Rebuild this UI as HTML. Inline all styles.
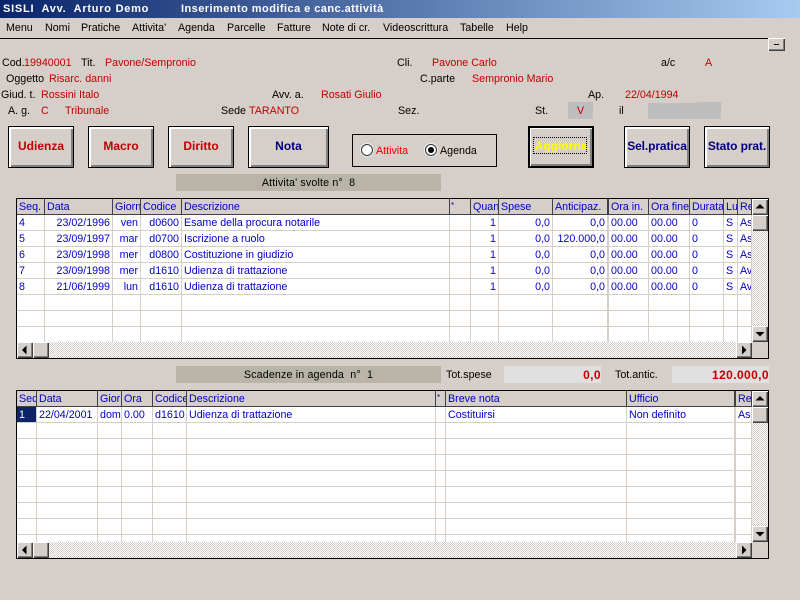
<!DOCTYPE html>
<html lang="it">
<head>
<meta charset="utf-8">
<title>SISLI</title>
<style>
html,body{margin:0;padding:0}
body{width:800px;height:600px;background:#d6cec8;position:relative;overflow:hidden;font:10.7px/15px "Liberation Sans",sans-serif;color:#000}
.a,.t,.r,.k,.b{position:absolute;white-space:pre}
.t,.r{line-height:14px}
.r{color:#c00000}
#title{position:absolute;left:0;top:0;width:800px;height:18px;background:linear-gradient(90deg,#0a246a,#a6caf0)}
#title span{position:absolute;top:2px;color:#fff;font:bold 11px/15px "Liberation Sans",sans-serif;white-space:pre;letter-spacing:.45px}
.b{box-sizing:border-box;top:126px;height:42px;width:66px;background:#d6cec8;border:1px solid #000;box-shadow:inset 2px 2px 0 #fff,inset -2px -2px 0 #808080;font:bold 12px/38px "Liberation Sans",sans-serif;text-align:center;color:#c00000}
.n{color:#00007f}
.s{position:absolute;background:#b8b4a8;text-align:center;left:176px;width:265px;height:17px;line-height:18px;white-space:pre;letter-spacing:.15px}
.f{position:absolute;top:366px;height:17px;background:#e0e0e0;color:#c00000;font:bold 12px/18px "Liberation Sans",sans-serif;text-align:right;letter-spacing:.4px}
.g{position:absolute;left:16px;width:751px;border:1px solid #000;overflow:hidden;background:#fff}
table{position:absolute;left:0;top:0;border-spacing:0;table-layout:fixed;color:#0000c8;font:10.7px/13px "Liberation Sans",sans-serif}
td,th{box-sizing:border-box;height:16px;padding:2px 2px 0;border-right:1px solid #d6cec8;border-bottom:1px solid #d6cec8;white-space:nowrap;overflow:hidden;font-weight:normal;text-align:left;vertical-align:top}
th{background:#d6cec8;border-right-color:#404040;border-bottom-color:#404040}
th.st{font-size:8px;padding:0 1px}
.x{text-align:right}
.w{border-right-width:2px}
.h{position:absolute;background-color:#fff;background-image:conic-gradient(#d6cec8 25%,#fff 0 50%,#d6cec8 0 75%,#fff 0);background-size:2px 2px}
.u{position:absolute;box-sizing:border-box;background:#d6cec8;box-shadow:inset 1px 1px 0 #fff,inset -1px -1px 0 #404040,inset -2px -2px 0 #808080}
.u svg{position:absolute;left:0;top:0}
.c{position:absolute;background:#d6cec8}
.o{position:absolute;top:144px;width:12px;height:12px;box-sizing:border-box;border-radius:50%;background:#fff;border:1px solid #333;box-shadow:0 0 0 1px #eee}
</style>
</head>
<body>
<div id="title"><span style="left:3px;letter-spacing:.75px">SISLI  Avv.  Arturo Demo</span><span style="left:181px">Inserimento modifica e canc.attività</span></div>

<div class="a" style="left:6px;top:21px">Menu</div>
<div class="a" style="left:45px;top:21px">Nomi</div>
<div class="a" style="left:81px;top:21px">Pratiche</div>
<div class="a" style="left:132px;top:21px">Attivita'</div>
<div class="a" style="left:178px;top:21px">Agenda</div>
<div class="a" style="left:227px;top:21px">Parcelle</div>
<div class="a" style="left:277px;top:21px">Fatture</div>
<div class="a" style="left:322px;top:21px">Note di cr.</div>
<div class="a" style="left:383px;top:21px">Videoscrittura</div>
<div class="a" style="left:460px;top:21px">Tabelle</div>
<div class="a" style="left:506px;top:21px">Help</div>
<div class="c" style="left:0;top:38px;width:768px;height:1px;background:#000"></div>
<div class="u" style="left:768px;top:38px;width:17px;height:13px"><svg width="17" height="13"><rect x="6" y="6" width="5" height="1" fill="#000"/></svg></div>

<div class="t" style="left:2px;top:56px">Cod.</div><div class="r" style="left:24px;top:56px">19940001</div>
<div class="t" style="left:81px;top:56px">Tit.</div><div class="r" style="left:105px;top:56px">Pavone/Sempronio</div>
<div class="t" style="left:397px;top:56px">Cli.</div><div class="r" style="left:432px;top:56px">Pavone Carlo</div>
<div class="t" style="left:661px;top:56px">a/c</div><div class="r" style="left:705px;top:56px">A</div>

<div class="t" style="left:6px;top:72px">Oggetto</div><div class="r" style="left:49px;top:72px">Risarc. danni</div>
<div class="t" style="left:420px;top:72px">C.parte</div><div class="r" style="left:472px;top:72px">Sempronio Mario</div>

<div class="t" style="left:1px;top:88px">Giud. t.</div><div class="r" style="left:41px;top:88px">Rossini Italo</div>
<div class="t" style="left:272px;top:88px">Avv. a.</div><div class="r" style="left:321px;top:88px">Rosati Giulio</div>
<div class="t" style="left:588px;top:88px">Ap.</div><div class="r" style="left:625px;top:88px">22/04/1994</div>

<div class="c" style="left:568px;top:102px;width:25px;height:17px;background:#bebebe"></div>
<div class="c" style="left:648px;top:103px;width:49px;height:16px;background:#bebebe"></div>
<div class="c" style="left:697px;top:102px;width:24px;height:17px;background:#bebebe"></div>
<div class="t" style="left:8px;top:104px">A. g.</div><div class="r" style="left:41px;top:104px">C</div><div class="r" style="left:65px;top:104px">Tribunale</div>
<div class="t" style="left:221px;top:104px">Sede</div><div class="r" style="left:249px;top:104px">TARANTO</div>
<div class="t" style="left:398px;top:104px">Sez.</div>
<div class="t" style="left:535px;top:104px">St.</div><div class="r" style="left:577px;top:104px">V</div>
<div class="t" style="left:619px;top:104px">il</div>

<div class="b" style="left:8px">Udienza</div>
<div class="b" style="left:88px">Macro</div>
<div class="b" style="left:168px">Diritto</div>
<div class="b n" style="left:248px;width:81px">Nota</div>

<div class="a" style="left:352px;top:134px;width:143px;height:31px;border:1px solid #000"></div>
<div class="o" style="left:361px"></div>
<div class="a" style="left:376px;top:144px;color:#f00000">Attivita</div>
<div class="o" style="left:425px"><div style="position:absolute;left:2px;top:2px;width:6px;height:6px;border-radius:50%;background:#000"></div></div>
<div class="a" style="left:440px;top:144px">Agenda</div>

<div class="b" style="left:528px;border-width:2px;color:#ffff00;line-height:36px;box-shadow:inset 1px 1px 0 #fff,inset -2px -2px 0 #808080">Aggiorna<div style="position:absolute;left:3px;top:9px;width:52px;height:15px;border:1px dotted #000"></div></div>
<div class="b n" style="left:624px;white-space:nowrap;letter-spacing:-.1px">Sel.pratica</div>
<div class="b n" style="left:704px;white-space:nowrap;letter-spacing:-.1px">Stato prat.</div>

<div class="s" style="top:174px">Attivita' svolte n°  8</div>

<div class="g" style="top:198px;height:159px">
<table style="width:735px">
<colgroup><col style="width:28px"><col style="width:68px"><col style="width:28px"><col style="width:41px"><col style="width:268px"><col style="width:21px"><col style="width:28px"><col style="width:54px"><col style="width:56px"><col style="width:40px"><col style="width:41px"><col style="width:34px"><col style="width:14px"><col style="width:14px"></colgroup>
<tr><th>Seq.</th><th>Data</th><th>Giorn</th><th>Codice</th><th>Descrizione</th><th class="st">*</th><th>Quan</th><th>Spese</th><th class="w">Anticipaz.</th><th>Ora in.</th><th>Ora fine</th><th>Durata</th><th>Lu</th><th>Re</th></tr>
<tr><td>4</td><td class="x">23/02/1996</td><td class="x">ven</td><td class="x">d0600</td><td>Esame della procura notarile</td><td></td><td class="x">1</td><td class="x">0,0</td><td class="x w">0,0</td><td>00.00</td><td>00.00</td><td>0</td><td>S</td><td>As</td></tr>
<tr><td>5</td><td class="x">23/09/1997</td><td class="x">mar</td><td class="x">d0700</td><td>Iscrizione a ruolo</td><td></td><td class="x">1</td><td class="x">0,0</td><td class="x w">120.000,0</td><td>00.00</td><td>00.00</td><td>0</td><td>S</td><td>As</td></tr>
<tr><td>6</td><td class="x">23/09/1998</td><td class="x">mer</td><td class="x">d0800</td><td>Costituzione in giudizio</td><td></td><td class="x">1</td><td class="x">0,0</td><td class="x w">0,0</td><td>00.00</td><td>00.00</td><td>0</td><td>S</td><td>As</td></tr>
<tr><td>7</td><td class="x">23/09/1998</td><td class="x">mer</td><td class="x">d1610</td><td>Udienza di trattazione</td><td></td><td class="x">1</td><td class="x">0,0</td><td class="x w">0,0</td><td>00.00</td><td>00.00</td><td>0</td><td>S</td><td>Av</td></tr>
<tr><td>8</td><td class="x">21/06/1999</td><td class="x">lun</td><td class="x">d1610</td><td>Udienza di trattazione</td><td></td><td class="x">1</td><td class="x">0,0</td><td class="x w">0,0</td><td>00.00</td><td>00.00</td><td>0</td><td>S</td><td>Av</td></tr>
<tr><td></td><td></td><td></td><td></td><td></td><td></td><td></td><td></td><td class="w"></td><td></td><td></td><td></td><td></td><td></td></tr>
<tr><td></td><td></td><td></td><td></td><td></td><td></td><td></td><td></td><td class="w"></td><td></td><td></td><td></td><td></td><td></td></tr>
<tr><td></td><td></td><td></td><td></td><td></td><td></td><td></td><td></td><td class="w"></td><td></td><td></td><td></td><td></td><td></td></tr>
</table>
<div class="h" style="left:735px;top:0;width:16px;height:143px"></div>
<div class="u" style="left:735px;top:0;width:16px;height:16px"><svg width="16" height="16"><path d="M8 5L12.5 9.5H3.5Z" fill="#000"/></svg></div>
<div class="u" style="left:735px;top:16px;width:16px;height:16px"></div>
<div class="u" style="left:735px;top:127px;width:16px;height:16px"><svg width="16" height="16"><path d="M3.5 6H12.5L8 10.5Z" fill="#000"/></svg></div>
<div class="h" style="left:0;top:143px;width:735px;height:16px"></div>
<div class="u" style="left:0;top:143px;width:16px;height:16px"><svg width="16" height="16"><path d="M5 8L9.5 3.5V12.5Z" fill="#000"/></svg></div>
<div class="u" style="left:16px;top:143px;width:16px;height:16px"></div>
<div class="u" style="left:719px;top:143px;width:16px;height:16px"><svg width="16" height="16"><path d="M6 3.5L10.5 8L6 12.5Z" fill="#000"/></svg></div>
<div class="c" style="left:735px;top:143px;width:16px;height:16px"></div>
</div>

<div class="s" style="top:366px">Scadenze in agenda  n°  1</div>
<div class="t" style="left:446px;top:368px">Tot.spese</div>
<div class="f" style="left:504px;width:97px">0,0</div>
<div class="t" style="left:615px;top:368px">Tot.antic.</div>
<div class="f" style="left:672px;width:97px">120.000,0</div>

<div class="g" style="top:390px;height:167px">
<table style="width:735px">
<colgroup><col style="width:20px"><col style="width:61px"><col style="width:24px"><col style="width:31px"><col style="width:34px"><col style="width:249px"><col style="width:10px"><col style="width:181px"><col style="width:109px"><col style="width:16px"></colgroup>
<tr><th>Seq</th><th>Data</th><th>Giorn</th><th>Ora</th><th>Codice</th><th>Descrizione</th><th class="st">*</th><th>Breve nota</th><th class="w">Ufficio</th><th>Re</th></tr>
<tr><td style="background:#0a246a;color:#fff">1</td><td>22/04/2001</td><td>dom</td><td>0.00</td><td>d1610</td><td>Udienza di trattazione</td><td></td><td>Costituirsi</td><td class="w">Non definito</td><td>As:</td></tr>
<tr><td></td><td></td><td></td><td></td><td></td><td></td><td></td><td></td><td class="w"></td><td></td></tr>
<tr><td></td><td></td><td></td><td></td><td></td><td></td><td></td><td></td><td class="w"></td><td></td></tr>
<tr><td></td><td></td><td></td><td></td><td></td><td></td><td></td><td></td><td class="w"></td><td></td></tr>
<tr><td></td><td></td><td></td><td></td><td></td><td></td><td></td><td></td><td class="w"></td><td></td></tr>
<tr><td></td><td></td><td></td><td></td><td></td><td></td><td></td><td></td><td class="w"></td><td></td></tr>
<tr><td></td><td></td><td></td><td></td><td></td><td></td><td></td><td></td><td class="w"></td><td></td></tr>
<tr><td></td><td></td><td></td><td></td><td></td><td></td><td></td><td></td><td class="w"></td><td></td></tr>
<tr><td></td><td></td><td></td><td></td><td></td><td></td><td></td><td></td><td class="w"></td><td></td></tr>
</table>
<div class="h" style="left:735px;top:0;width:16px;height:151px"></div>
<div class="u" style="left:735px;top:0;width:16px;height:16px"><svg width="16" height="16"><path d="M8 5L12.5 9.5H3.5Z" fill="#000"/></svg></div>
<div class="u" style="left:735px;top:16px;width:16px;height:16px"></div>
<div class="u" style="left:735px;top:135px;width:16px;height:16px"><svg width="16" height="16"><path d="M3.5 6H12.5L8 10.5Z" fill="#000"/></svg></div>
<div class="h" style="left:0;top:151px;width:735px;height:16px"></div>
<div class="u" style="left:0;top:151px;width:16px;height:16px"><svg width="16" height="16"><path d="M5 8L9.5 3.5V12.5Z" fill="#000"/></svg></div>
<div class="u" style="left:16px;top:151px;width:16px;height:16px"></div>
<div class="u" style="left:719px;top:151px;width:16px;height:16px"><svg width="16" height="16"><path d="M6 3.5L10.5 8L6 12.5Z" fill="#000"/></svg></div>
<div class="c" style="left:735px;top:151px;width:16px;height:16px"></div>
</div>
</body>
</html>
